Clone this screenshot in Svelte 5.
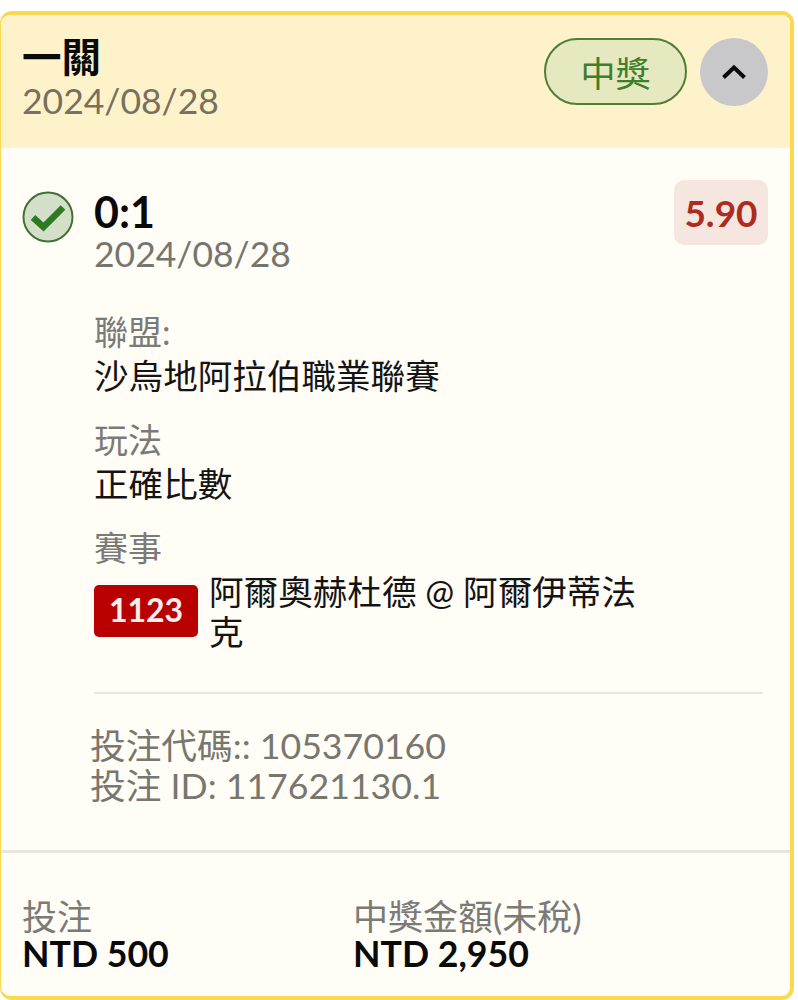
<script>
	const details = [
		{ label: '聯盟:', value: '沙烏地阿拉伯職業聯賽' },
		{ label: '玩法', value: '正確比數' }
	];
</script>

<div class="page">
	<div class="card">
		<header class="head">
			<div class="head-text">
				<div class="title">一關</div>
				<div class="date">2024/08/28</div>
			</div>
			<div class="status">中獎</div>
			<button class="toggle" type="button" aria-label="收合">
				<svg width="28" height="18" viewBox="0 0 28 18" fill="none">
					<path d="M3.5 14.5 14 4.5l10.5 10" stroke="#0a0a0a" stroke-width="4" />
				</svg>
			</button>
		</header>

		<section class="bet">
			<div class="pick">
				<svg class="check" width="52" height="52" viewBox="0 0 52 52">
					<circle cx="26" cy="26" r="24.5" fill="#d3dfc8" stroke="#3f7336" stroke-width="2" />
					<path d="M11 26.5 21.5 36 41 16.5" fill="none" stroke="#2e7a22" stroke-width="6.5" />
				</svg>
				<div class="pick-text">
					<div class="score">0:1</div>
					<div class="date">2024/08/28</div>
				</div>
				<div class="odds">5.90</div>
			</div>

			<div class="details">
				{#each details as d}
					<div class="detail">
						<div class="label">{d.label}</div>
						<div class="value">{d.value}</div>
					</div>
				{/each}
				<div class="detail">
					<div class="label">賽事</div>
					<div class="match">
						<span class="code">1123</span>
						<span class="value teams">阿爾奧赫杜德 @ 阿爾伊蒂法克</span>
					</div>
				</div>
			</div>

			<div class="ids">
				<div>投注代碼:: 105370160</div>
				<div>投注 ID: 117621130.1</div>
			</div>
		</section>

		<footer class="foot">
			<div class="stake">
				<div class="label">投注</div>
				<div class="amount">NTD 500</div>
			</div>
			<div>
				<div class="label">中獎金額(未稅)</div>
				<div class="amount">NTD 2,950</div>
			</div>
		</footer>
	</div>
</div>

<style>
	:global(body) {
		margin: 0;
		background: #fff;
	}
	* {
		box-sizing: border-box;
	}
	.page {
		width: 798px;
		height: 1000px;
		padding: 11px 4px 0 0;
		overflow: hidden;
		font-family: Lato, 'Noto Sans CJK TC', sans-serif;
		color: #111;
	}
	.card {
		height: 989px;
		border: 4px solid #f9d94e;
		border-left-width: 1px;
		border-radius: 12px;
		background: #fffdf6;
		overflow: hidden;
		display: flex;
		flex-direction: column;
	}
	.head {
		height: 133px;
		flex: none;
		background: #fef2cb;
		display: flex;
		align-items: flex-start;
		padding: 20px 22px 0 21px;
	}
	.head-text {
		flex: 1;
	}
	.title {
		font-size: 39.5px;
		line-height: 44px;
		font-weight: 700;
		color: #0a0a0a;
	}
	.date {
		font-size: 35.5px;
		line-height: 40px;
		color: #77705c;
	}
	.head-text .date {
		margin-top: 2px;
	}
	.status {
		width: 143px;
		height: 67px;
		margin-top: 3px;
		border: 2px solid #4f7d3a;
		border-radius: 34px;
		background: #e6e8bf;
		color: #3d7f2c;
		font-size: 35px;
		display: flex;
		align-items: center;
		justify-content: center;
	}
	.toggle {
		width: 68px;
		height: 68px;
		margin: 3px 0 0 13px;
		border: none;
		border-radius: 50%;
		background: #c8c8cb;
		padding: 0;
		display: flex;
		align-items: center;
		justify-content: center;
	}
	.bet {
		height: 705px;
		flex: none;
		padding: 32px 22px 0 21px;
		border-bottom: 3px solid #e8e6e0;
	}
	.pick {
		display: flex;
		align-items: flex-start;
	}
	.check {
		flex: none;
		margin-top: 11px;
	}
	.pick-text {
		flex: 1;
		margin-left: 20px;
	}
	.pick-text .date {
		color: #757570;
	}
	.score {
		font-size: 43px;
		line-height: 44px;
		margin-top: 10px;
		font-weight: 700;
		color: #0a0a0a;
	}
	.odds {
		width: 94px;
		height: 65px;
		border-radius: 10px;
		background: #f6e6e0;
		color: #ac2c20;
		font-size: 37px;
		font-weight: 700;
		display: flex;
		align-items: center;
		justify-content: center;
	}
	.details {
		margin: 39px 0 0 72px;
		display: flex;
		flex-direction: column;
		gap: 26px;
	}
	.label {
		font-size: 34px;
		line-height: 38px;
		color: #7a7a76;
	}
	.value {
		font-size: 34.6px;
		line-height: 38px;
		color: #141414;
	}
	.detail .value {
		margin-top: 6px;
	}
	.match {
		display: flex;
		align-items: flex-start;
		margin-top: 5px;
	}
	.code {
		flex: none;
		width: 104px;
		height: 52px;
		margin-top: 13px;
		padding-bottom: 4px;
		border-radius: 5px;
		background: #b80000;
		color: #fbeeee;
		font-size: 32px;
		font-weight: 700;
		display: flex;
		align-items: center;
		justify-content: center;
	}
	.detail .teams {
		width: 436px;
		margin: 0 0 0 11px;
		line-height: 40px;
	}
	.ids {
		margin: 40px 5px 0 72px;
		border-top: 2px solid #e8e6e0;
		padding-top: 32px;
		font-size: 35.7px;
		line-height: 40px;
		color: #77776f;
	}
	.ids div {
		margin-left: -4px;
	}
	.foot {
		flex: 1;
		display: flex;
		padding: 43px 22px 0 21px;
	}
	.stake {
		width: 331px;
	}
	.foot .label {
		font-size: 35px;
		line-height: 40px;
	}
	.amount {
		font-size: 35.7px;
		line-height: 36px;
		font-weight: 700;
		color: #0a0a0a;
	}
</style>
